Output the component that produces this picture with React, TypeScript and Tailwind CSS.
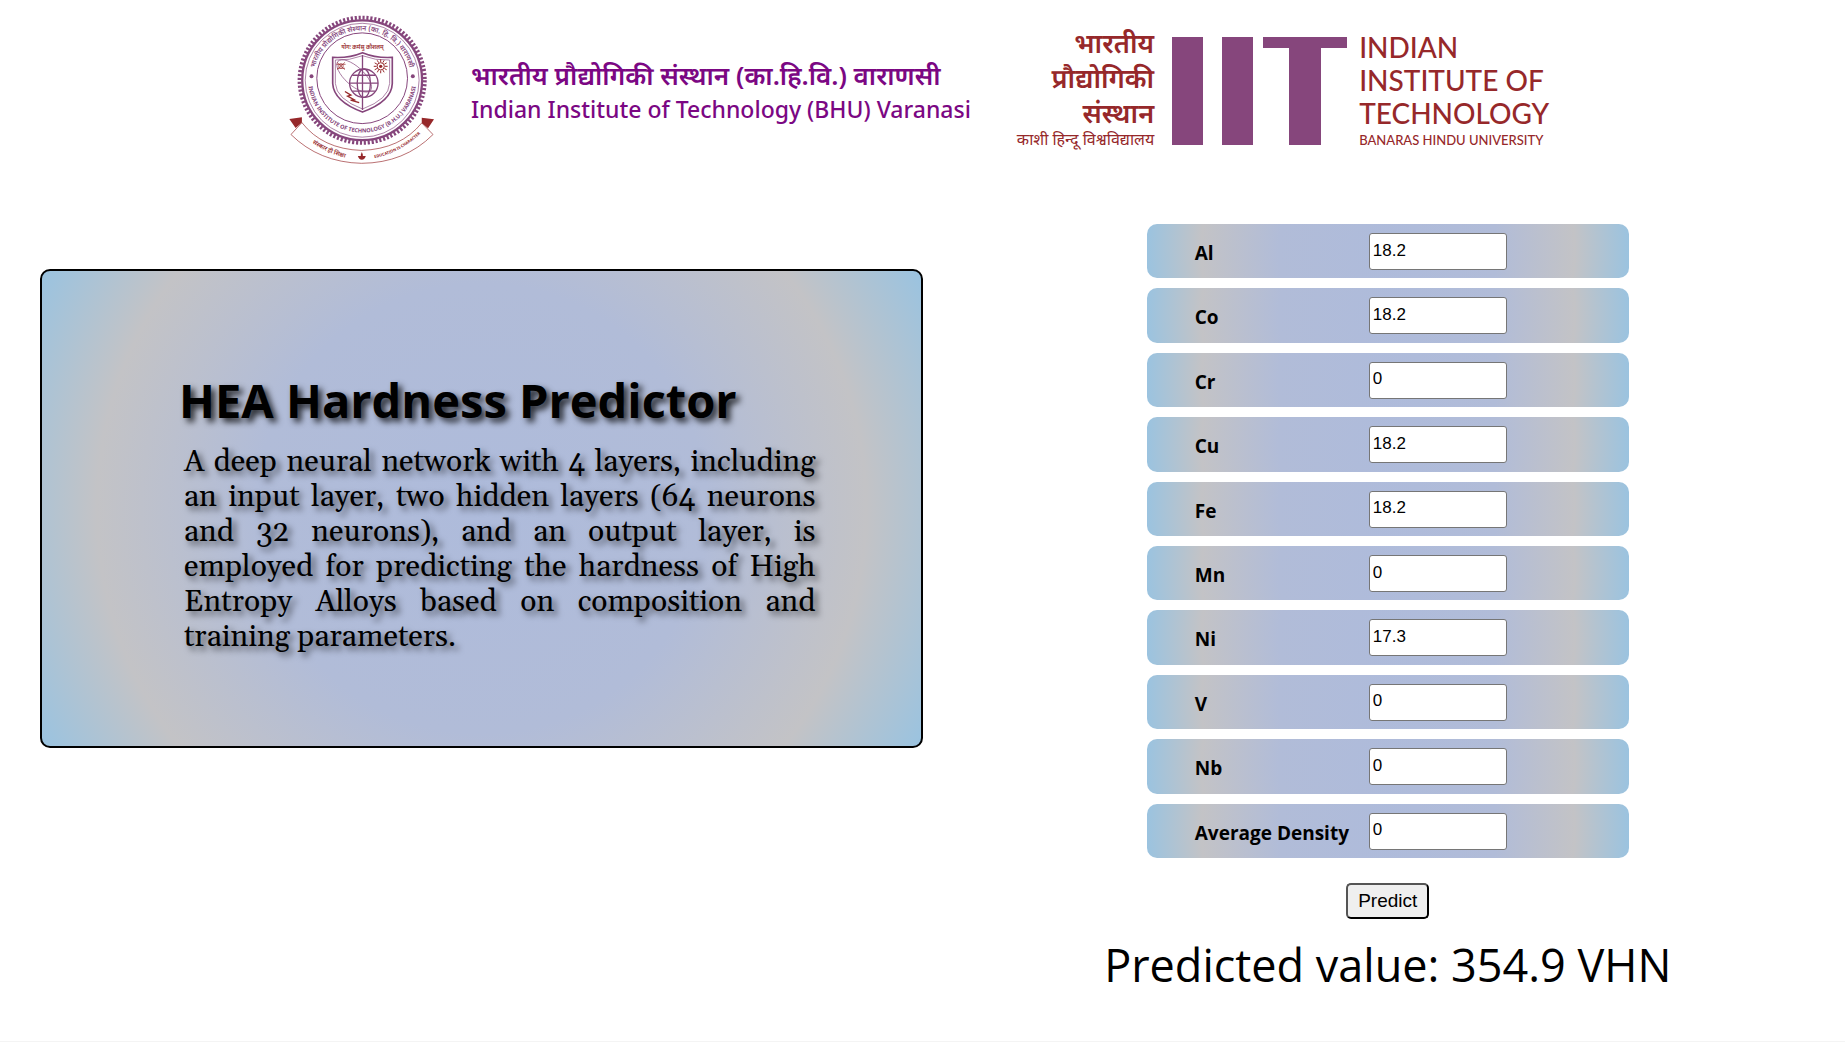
import { useState } from "react";

const FIELDS = [
  { id: "al", label: "Al", initial: "18.2" },
  { id: "co", label: "Co", initial: "18.2" },
  { id: "cr", label: "Cr", initial: "0" },
  { id: "cu", label: "Cu", initial: "18.2" },
  { id: "fe", label: "Fe", initial: "18.2" },
  { id: "mn", label: "Mn", initial: "0" },
  { id: "ni", label: "Ni", initial: "17.3" },
  { id: "v", label: "V", initial: "0" },
  { id: "nb", label: "Nb", initial: "0" },
  { id: "density", label: "Average Density", initial: "0" },
];

function Emblem() {
  const rays = Array.from({ length: 12 }, (_, i) => (i * Math.PI) / 6);
  return (
    <svg viewBox="28 26 444 453" className="h-[150px] w-[147px] shrink-0" role="img" aria-label="IIT (BHU) Varanasi emblem">
      <defs>
        <path id="ring-top" d="M106 240 A147 147 0 1 1 398 240" />
        <path id="ring-bottom" d="M88 220 A164 164 0 0 0 416 220" />
        <path id="ribbon-left" d="M76 396 Q140 452 232 466" />
        <path id="ribbon-right" d="M276 463 Q365 451 438 378" />
      </defs>
      <g fill="none" stroke="#86467c">
        <circle cx="252" cy="226" r="189" strokeWidth="12" strokeDasharray="6.5 5.37" />
        <circle cx="252" cy="226" r="181" strokeWidth="7" />
        <circle cx="252" cy="226" r="172" strokeWidth="2" />
        <circle cx="252" cy="220" r="137" strokeWidth="3" />
        <path strokeWidth="5" d="M163 157 Q212 160 253 143 Q294 160 343 157 V236 Q341 290 253 322 Q166 290 163 236 Z" />
        <path strokeWidth="2" d="M171 165 Q214 167 253 152 Q292 167 335 165 V236 Q333 283 253 313 Q174 283 171 236 Z" />
        <path strokeWidth="4" d="M253 150 V316" />
        <circle cx="257" cy="235" r="43" strokeWidth="4" />
        <ellipse cx="257" cy="235" rx="20" ry="43" strokeWidth="4" />
        <path strokeWidth="4" d="M214 235 H300 M222 211 H292 M222 259 H292" />
        <ellipse cx="228" cy="213" rx="66" ry="28" strokeWidth="2" transform="rotate(42 228 213)" />
      </g>
      <circle cx="99" cy="214" r="6" fill="#86467c" />
      <circle cx="405" cy="214" r="6" fill="#86467c" />
      <g fill="#86467c" className="font-['Noto_Sans_Devanagari','Noto_Sans',sans-serif] font-semibold">
        <text fontSize="21" textAnchor="middle">
          <textPath href="#ring-top" startOffset="50%">भारतीय प्रौद्योगिकी संस्थान (का. हि. वि.) वाराणसी</textPath>
        </text>
        <text fontSize="17" textAnchor="middle" className="font-bold">
          <textPath href="#ring-bottom" startOffset="50%">INDIAN INSTITUTE OF TECHNOLOGY (B.H.U.) VARANASI</textPath>
        </text>
      </g>
      <g fill="#96282a" className="font-['Noto_Sans_Devanagari','Noto_Sans',sans-serif] font-semibold">
        <text x="253" y="133" fontSize="17" textAnchor="middle">योगः कर्मसु कौशलम्</text>
        <text fontSize="18" textAnchor="middle">
          <textPath href="#ribbon-left" startOffset="50%">संस्कार ही शिक्षा</textPath>
        </text>
        <text fontSize="12" textAnchor="middle" className="font-bold">
          <textPath href="#ribbon-right" startOffset="50%">EDUCATION IS CHARACTER</textPath>
        </text>
        <path d="M32 343 L70 338 V354 L51 370 Z M469 344 L432 339 V355 L451 371 Z" />
        <path d="M251 443 l3 7 v5 h9 q-3 11 -12 11 q-9 0 -12 -11 h9 v-5 Z" />
        <circle cx="308" cy="184" r="5" />
      </g>
      <g fill="none" stroke="#96282a" strokeWidth="2">
        <path d="M70 354 Q132 434 250 438 M70 354 L37 390 Q122 474 250 477" />
        <path d="M432 355 Q368 434 250 438 M432 355 L466 390 Q380 476 250 477" />
        <path strokeWidth="2" d="M176 172 L200 194 M200 172 L176 194 M174 178 H202 M176 190 H200" />
        <circle cx="188" cy="183" r="7" />
        <circle cx="308" cy="184" r="11" strokeWidth="3" />
        {rays.map((a) => (
          <path
            key={a}
            strokeWidth="3"
            d={`M${308 + 13 * Math.cos(a)} ${184 + 13 * Math.sin(a)} L${308 + 21 * Math.cos(a)} ${184 + 21 * Math.sin(a)}`}
          />
        ))}
        <path strokeWidth="4" d="M200 260 L218 271 L208 274 L228 285 L217 286 L243 294" />
      </g>
    </svg>
  );
}

function IitLogo() {
  return (
    <div className="flex items-start text-[#96282a]">
      <div className="mt-1 text-right font-['Noto_Sans_Devanagari','Noto_Sans',sans-serif]">
        <p className="text-[27px] leading-[35px] font-semibold">
          भारतीय
          <br />
          प्रौद्योगिकी
          <br />
          संस्थान
        </p>
        <p className="text-[16px] leading-4">काशी हिन्दू विश्वविद्यालय</p>
      </div>
      <svg viewBox="0 0 175 108" className="mt-3 mr-3 ml-[18px] h-[108px] w-[175px] shrink-0" fill="#86467c" role="img" aria-label="IIT">
        <path d="M0 0 H31 V108 H0 Z M50 0 H81 V108 H50 Z M91 0 H175 V11 H149 V108 H117 V11 H91 Z" />
      </svg>
      <div className="mt-[6px] font-['Lato',sans-serif]">
        <p className="text-[28px] leading-[33px] font-medium">
          INDIAN
          <br />
          INSTITUTE OF
          <br />
          TECHNOLOGY
        </p>
        <p className="text-[13px] leading-[21px] font-medium">BANARAS HINDU UNIVERSITY</p>
      </div>
    </div>
  );
}

function Header() {
  return (
    <header className="flex justify-center pt-[14px] pr-2">
      <div className="flex h-[151px] items-start">
        <Emblem />
        <div className="mt-[43px] ml-9 font-['Noto_Sans','Noto_Sans_Devanagari',sans-serif] font-semibold text-[#7b0783]">
          <p className="text-[26px] leading-9">भारतीय प्रौद्योगिकी संस्थान (का.हि.वि.) वाराणसी</p>
          <p className="text-[23px] leading-8 font-medium">Indian Institute of Technology (BHU) Varanasi</p>
        </div>
      </div>
      <div className="ml-[46px] pt-[11px]">
        <IitLogo />
      </div>
    </header>
  );
}

export default function App() {
  const [values, setValues] = useState(() => Object.fromEntries(FIELDS.map((f) => [f.id, f.initial])));
  return (
    <div className="flex min-h-screen flex-col border-b border-[#f4f4f4] bg-white font-['Open_Sans','Noto_Sans',sans-serif] text-black">
      <Header />
      <main className="mt-[59px] flex items-start">
        <section className="mt-[45px] w-1/2 pl-10">
          <div className="rounded-[10px] border-2 border-black bg-[radial-gradient(circle,#aebbdb_0%,#b1bcd8_45%,#c3c3c6_77%,#9ac3e0_100%)] pt-[97px] pr-[105px] pb-[91px] pl-[137px]">
            <h1 className="text-[47px] leading-[64px] font-bold text-shadow-[4px_4px_6px_rgb(0_0_0/0.8)]">HEA Hardness Predictor</h1>
            <p className="mt-[13px] ml-[5px] text-justify font-['Gelasio','Georgia',serif] text-[30px] leading-[35px] text-shadow-[4px_4px_6px_rgb(0_0_0/0.6)]">
              A deep neural network with 4 layers, including an input layer, two hidden layers (64 neurons and 32 neurons), and an output layer, is
              employed for predicting the hardness of High Entropy Alloys based on composition and training parameters.
            </p>
          </div>
        </section>
        <section className="flex-1 pl-2">
          <form className="flex flex-col items-center" onSubmit={(e) => e.preventDefault()}>
            <div className="grid h-[634px] w-[482px] auto-rows-fr gap-[10px]">
              {FIELDS.map((f) => (
                <div
                  key={f.id}
                  className="flex items-start rounded-[10px] bg-[radial-gradient(circle,#aebbdb_0%,#b1bcd8_45%,#c3c3c6_77%,#9ac3e0_100%)] pt-[9px] pl-12"
                >
                  <label htmlFor={f.id} className="w-[174px] pt-[6px] text-[19px] leading-7 font-bold whitespace-nowrap">
                    {f.label}
                  </label>
                  <input
                    id={f.id}
                    type="text"
                    value={values[f.id]}
                    onChange={(e) => setValues({ ...values, [f.id]: e.target.value })}
                    className="h-[37px] w-[138px] rounded-[3px] border border-[#767676] bg-white px-[3px] pb-[2px] font-['Liberation_Sans',sans-serif] text-[17px] leading-5"
                  />
                </div>
              ))}
            </div>
            <button
              type="submit"
              className="mt-[25px] h-9 rounded-[5px] border-2 border-t-[#555] border-r-black border-b-black border-l-[#555] bg-[#efefef] px-[10px] font-['Liberation_Sans',sans-serif] text-[19px] leading-7"
            >
              Predict
            </button>
            <output className="mt-3 text-[45px] leading-[68px]">Predicted value: 354.9 VHN</output>
          </form>
        </section>
      </main>
    </div>
  );
}
